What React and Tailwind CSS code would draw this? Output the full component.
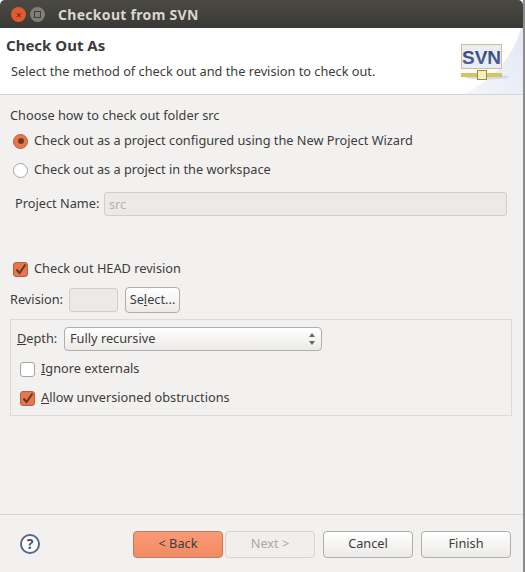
const font = { fontFamily: '"Noto Sans", sans-serif' };

function Radio({ checked }) {
  if (checked) {
    return (
      <span className="w-[15px] h-[15px] rounded-full bg-[#e8764a] border border-[#b9603e] flex items-center justify-center shrink-0">
        <span className="w-[6px] h-[6px] rounded-full bg-[#6e3a26]" />
      </span>
    );
  }
  return <span className="w-[15px] h-[15px] rounded-full bg-white border border-[#a8a6a3] shrink-0" />;
}

function Check({ checked }) {
  if (!checked) {
    return <span className="w-[15px] h-[15px] rounded-[3px] bg-white border border-[#a8a6a3] shrink-0" />;
  }
  return (
    <span className="w-[15px] h-[15px] rounded-[3px] bg-[#e8764a] border border-[#b9603e] shrink-0 flex items-center justify-center">
      <svg width="13" height="13" viewBox="0 0 13 13">
        <path d="M2.5 6.5 L5.5 10 L11.5 1.5" fill="none" stroke="#5c3a2c" strokeWidth="2" />
      </svg>
    </span>
  );
}

function Button({ children, className = '' }) {
  return (
    <button className={`rounded-[4px] border border-[#b0aeab] bg-gradient-to-b from-white to-[#ebeae8] text-[12.75px] text-[#3c3c3c] ${className}`}>
      {children}
    </button>
  );
}

function SvnLogo() {
  return (
    <svg width="66" height="66" viewBox="0 0 66 66" className="shrink-0">
      <defs>
        <linearGradient id="swoosh" x1="0" y1="1" x2="1" y2="0">
          <stop offset="0" stopColor="#f4f6fb" />
          <stop offset="1" stopColor="#e2e7f4" />
        </linearGradient>
        <linearGradient id="letters" x1="0" y1="0" x2="0" y2="1">
          <stop offset="0" stopColor="#2f3f7c" />
          <stop offset="1" stopColor="#5b6a98" />
        </linearGradient>
      </defs>
      <path d="M6 66 C34 54 56 30 64 0 L66 0 L66 66 Z" fill="url(#swoosh)" />
      <rect x="4.5" y="16.5" width="40" height="24" fill="#e9eef5" stroke="#d9b98a" />
      <text x="24.5" y="36" textAnchor="middle" fontSize="19" fontWeight="700" fill="url(#letters)" fontFamily="Liberation Sans, sans-serif">SVN</text>
      <ellipse cx="30" cy="49" rx="22" ry="2.5" fill="#d6d9e6" />
      <rect x="4" y="45" width="41" height="4" fill="#d8c45e" />
      <rect x="20.5" y="42.5" width="9" height="9" fill="#f6efc6" stroke="#a08c34" />
    </svg>
  );
}

export default function App() {
  return (
    <div className="w-[525px] h-[572px] flex bg-[#8c8c8c] overflow-hidden text-[12.75px] text-[#3c3c3c]" style={font}>
      <div className="w-[523px] flex flex-col bg-[#f2f1f0]">
        {/* Title bar */}
        <div className="h-[28px] rounded-t-[5px] bg-gradient-to-b from-[#4a4944] to-[#3a3935] flex items-center pl-[11px] pt-[1px] shrink-0">
          <span className="w-[15px] h-[15px] rounded-full bg-[#e2592c] flex items-center justify-center text-[10px] leading-none text-[#4a2a1c]">×</span>
          <span className="w-[15px] h-[15px] rounded-full bg-[#7f7e79] ml-[4px] flex items-center justify-center">
            <span className="w-[7px] h-[7px] border border-[#3f3e3a]" />
          </span>
          <span className="ml-[13px] font-bold text-[14px] text-[#d8d6d0] tracking-[0.3px]">Checkout from SVN</span>
        </div>

        {/* Header */}
        <div className="h-[67px] bg-white border-b border-[#d6d5d3] flex justify-between shrink-0">
          <div className="pl-[6px] pt-[7px]">
            <div className="font-bold text-[15px] leading-[20px] text-[#3c3c3c]">Check Out As</div>
            <div className="pl-[5px] mt-[6px] leading-[20px]">Select the method of check out and the revision to check out.</div>
          </div>
          <SvnLogo />
        </div>

        {/* Body */}
        <div className="flex-1 flex flex-col pl-[10px] pr-[11px]">
          <div className="mt-[11px] leading-[18px]">Choose how to check out folder src</div>
          <label className="flex items-center gap-[6px] mt-[7px] pl-[3px] h-[20px]">
            <Radio checked />
            Check out as a project configured using the New Project Wizard
          </label>
          <label className="flex items-center gap-[6px] mt-[9px] pl-[3px] h-[20px]">
            <Radio />
            Check out as a project in the workspace
          </label>
          <div className="flex items-center mt-[12px] pl-[5px] pr-[5px] h-[24px]">
            <span className="w-[89px]">Project Name:</span>
            <div className="flex-1 h-[24px] rounded-[3px] border border-[#d0cfcc] bg-[#ebeae8] text-[#b4b3b0] pl-[4px] leading-[22px]">src</div>
          </div>

          <label className="flex items-center gap-[6px] mt-[43px] pl-[3px] h-[20px]">
            <Check checked />
            Check out HEAD revision
          </label>
          <div className="flex items-center mt-[8px] h-[26px]">
            <span className="w-[59px]">Revision:</span>
            <div className="w-[49px] h-[24px] rounded-[3px] border border-[#d0cfcc] bg-[#ebeae8]" />
            <Button className="ml-[7px] w-[55px] h-[26px]">Se<span className="underline">l</span>ect...</Button>
          </div>

          <div className="mt-[6px] h-[97px] border border-[#dcdbd8] pl-[6px] pt-[7px]">
            <div className="flex items-center h-[24px]">
              <span className="w-[47px]"><span className="underline">D</span>epth:</span>
              <div className="w-[258px] h-[24px] rounded-[4px] border border-[#b0aeab] bg-gradient-to-b from-white to-[#ebeae8] flex items-center justify-between pl-[5px] pr-[6px]">
                <span>Fully recursive</span>
                <span className="flex flex-col gap-[4px]">
                  <span className="w-0 h-0 border-x-[3px] border-x-transparent border-b-[4px] border-b-[#666]" />
                  <span className="w-0 h-0 border-x-[3px] border-x-transparent border-t-[4px] border-t-[#666]" />
                </span>
              </div>
            </div>
            <label className="flex items-center gap-[6px] mt-[8px] pl-[3px] h-[20px]">
              <Check />
              <span><span className="underline">I</span>gnore externals</span>
            </label>
            <label className="flex items-center gap-[6px] mt-[9px] pl-[3px] h-[20px]">
              <Check checked />
              <span><span className="underline">A</span>llow unversioned obstructions</span>
            </label>
          </div>
        </div>

        {/* Footer */}
        <div className="h-[58px] border-t border-[#d6d5d3] flex items-center pl-[20px] pr-[12px] shrink-0">
          <span className="w-[20px] h-[20px] rounded-full border-2 border-[#56688c] bg-white flex items-center justify-center font-bold text-[14px] text-[#44516e] leading-none">?</span>
          <div className="ml-auto mt-[1px] flex">
            <button className="h-[27px] w-[90px] rounded-[4px] border border-[#c47a5c] bg-gradient-to-b from-[#fb9a76] to-[#f08a62] text-[12.75px] text-[#3c3c3c]">{'< Back'}</button>
            <button className="h-[27px] w-[90px] ml-[2px] rounded-[4px] border border-[#d6d5d3] bg-[#f0efee] text-[12.75px] text-[#a8a8a8]">{'Next >'}</button>
            <Button className="w-[90px] h-[27px] ml-[8px]">Cancel</Button>
            <Button className="w-[90px] h-[27px] ml-[8px]">Finish</Button>
          </div>
        </div>
      </div>
    </div>
  );
}
